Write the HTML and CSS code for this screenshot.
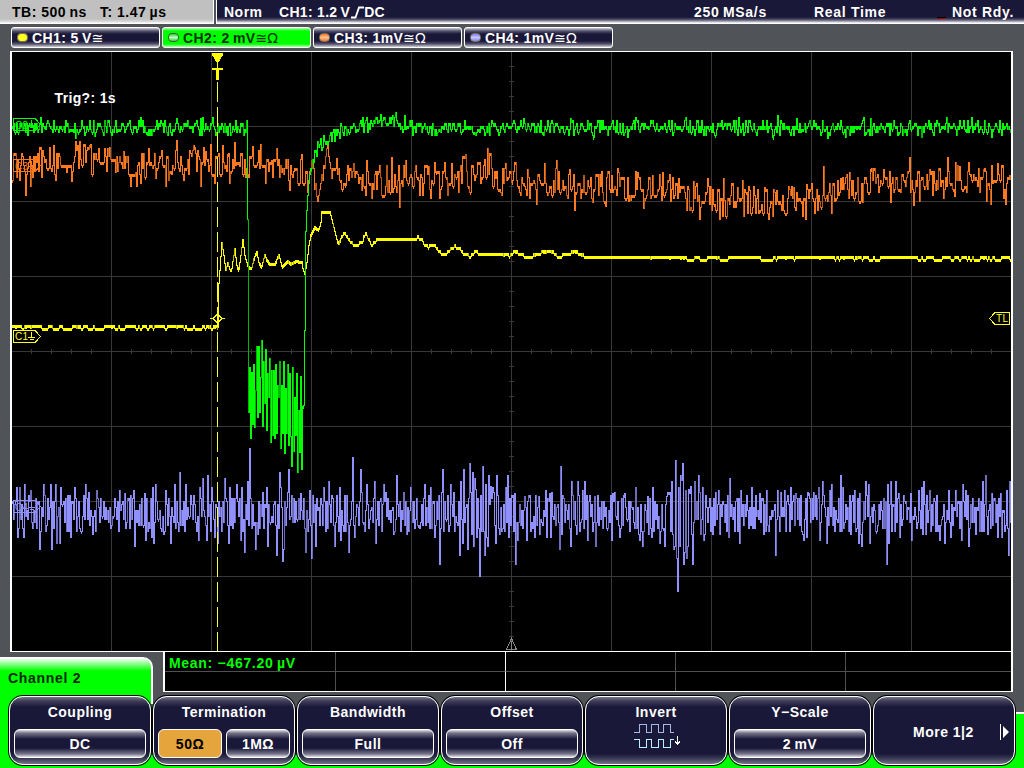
FILE: index.html
```html
<!DOCTYPE html>
<html lang="en">
<head>
    <meta charset="UTF-8">
    <title>Oscilloscope - Channel 2</title>
    <link rel="stylesheet" href="styles.css">
</head>
<body>
    <div class="screen">
        <header class="topbar">
            <div class="timebase"><span class="tb">TB: 500&#8201;ns</span><span class="tpos">T: 1.47&#8201;µs</span></div>
            <div class="status">
                <span class="mode">Norm</span>
                <span class="trigger">CH1: 1.2&#8201;V<svg class="edge" width="13" height="13" viewBox="0 0 13 13"><path d="M0 11.500H4.500L8 1.500H13"/></svg>DC</span>
                <span class="rate">250&#8201;MSa/s</span>
                <span class="acq">Real Time</span>
                <span class="led"></span>
                <span class="ready">Not Rdy.</span>
            </div>
        </header>

        <div class="channels">
            <div class="channel"><i class="dot yellow"></i><span>CH1: 5&#8201;V</span><b class="sym">≅</b></div>
            <div class="channel active"><i class="dot green"></i><span>CH2: 2&#8201;mV</span><b class="sym">≅Ω</b></div>
            <div class="channel"><i class="dot orange"></i><span>CH3: 1mV</span><b class="sym">≅Ω</b></div>
            <div class="channel"><i class="dot violet"></i><span>CH4: 1mV</span><b class="sym">≅Ω</b></div>
        </div>

        <div class="plot">
            <svg id="scope" width="999" height="599" viewBox="12 52 999 599">
                <path id="grid" class="grid"/>
                <path id="ch4" class="t4"/><path id="ch4d" class="t4 dim"/>
                <path id="ch3" class="t3"/><path id="ch3d" class="t3 dim"/>
                <path id="ch1" class="t1"/><path id="ch1d" class="t1 dim"/>
                <path id="ch2" class="t2"/><path id="ch2d" class="t2 dim"/>

                <!-- channel zero markers -->
                <g class="marker m2"><path d="M13.500 118.500H35L40.500 124.500L35 130.500H13.500Z"/><text x="15" y="129">C2</text><path d="M31.500 120V125M28 125.500H35M30 127.500H34"/></g>
                <g class="marker m3"><path d="M13.500 159.500H35L40.500 165.500L35 171.500H13.500Z"/><text x="15" y="170">C3</text><path d="M31.500 161V166M28 166.500H35M30 168.500H34"/></g>
                <g class="marker m1"><path d="M13.500 330.500H35L40.500 336.500L35 342.500H13.500Z"/><text x="15" y="340">C1</text><path d="M31.500 332V337M28 337.500H35M30 339.500H34"/></g>
                <g class="marker m4"><path d="M13.500 500.500H35L40.500 506.500L35 512.500H13.500Z"/><text x="15" y="511">C4</text><path d="M31.500 502V507M28 507.500H35M30 509.500H34"/></g>
                <g class="marker m1"><path d="M1009.500 312.500H995L989.500 318.500L995 324.500H1009.500Z"/><text x="996" y="322">TL</text></g>

                <!-- trigger position -->
                <path class="trig-line" d="M217.500 82V651"/>
                <path class="trig-fill" d="M212 53H223V55L218 63V68H223V70H219V80H216V70H212V68H217V63L212 55Z"/>
                <path class="trig-level" d="M210 318.500H213L217.500 314L222 318.500H225M213 318.500L217.500 323L222 318.500"/>
                <path class="center-mark" d="M511.500 638.500L506.500 649.500H516.500ZM511.500 641V649"/>
                <text class="trig-text" x="54.500" y="103">Trig?: 1s</text>
            </svg>
        </div>

        <div class="lower">
            <div class="tab">Channel 2</div>
            <div class="measure">
                <div class="mean">Mean: −467.20&#8201;µV</div><div></div><div></div><div></div><div></div>
                <div></div><div></div><div></div><div></div><div></div>
            </div>
        </div>

        <div class="menu">
            <div class="key"><span class="title">Coupling</span><div class="values"><span class="value">DC</span></div></div>
            <div class="key"><span class="title">Termination</span><div class="values"><span class="value selected">50Ω</span><span class="value">1MΩ</span></div></div>
            <div class="key"><span class="title">Bandwidth</span><div class="values"><span class="value">Full</span></div></div>
            <div class="key"><span class="title">Offset</span><div class="values"><span class="value">Off</span></div></div>
            <div class="key">
                <span class="title">Invert</span>
                <svg class="wave" width="48" height="28" viewBox="0 0 48 28">
                    <path class="w1" d="M0 10.500H5.500V2.500H12.500V10.500H17.500V2.500H24.500V10.500H29.500V2.500H36.500V10.500H40"/>
                    <path class="w2" d="M0 17.500H5.500V25.500H12.500V17.500H17.500V25.500H24.500V17.500H29.500V25.500H36.500V17.500H40"/>
                    <path class="w3" d="M43.500 14V22M41 19.500L43.500 22L46 19.500"/>
                </svg>
            </div>
            <div class="key"><span class="title">Y&#8722;Scale</span><div class="values"><span class="value">2&#8201;mV</span></div></div>
            <div class="key more"><span>More 1|2</span><svg class="next" width="10" height="16" viewBox="0 0 10 16"><path d="M0 0H1V16H0ZM3 2L9 8L3 14Z"/></svg></div>
        </div>
    </div>
    <script src="scope.js"></script>
</body>
</html>
```
FILE: styles.css
```css
* { box-sizing: border-box; }

body {
    margin: 0;
    background: #505357;
    font-family: "Liberation Sans", Arial, sans-serif;
    font-size: 14px;
    font-weight: bold;
    letter-spacing: 0.7px;
    color: #fff;
}

.screen {
    width: 1024px;
    height: 768px;
    display: flex;
    flex-direction: column;
    overflow: hidden;
    white-space: nowrap;
    background: #505357;
}

/* top status bar */
.topbar {
    display: flex;
    gap: 2px;
    height: 24px;
    line-height: 24px;
    flex: none;
}

.timebase {
    width: 214px;
    display: flex;
    padding-left: 12px;
    letter-spacing: 0.5px;
    color: #000;
    background: linear-gradient(#c0c0c0 19px, #e0e0e0 22px, #fff 23px);
    border-right: 1px solid #fff;
}
.tb { width: 88px; }

.status {
    flex: 1;
    display: flex;
    padding-left: 7px;
    border-left: 1px solid #fff;
    background: linear-gradient(#1a1838 17px, #3d3b57 19px, #8f8fa2 21px, #fff 23px);
}
.mode { width: 55px; letter-spacing: 0.5px; }
.trigger { width: 415px; letter-spacing: 0.3px; }
.rate { width: 120px; }
.acq { width: 123px; }
.led { width: 9px; height: 2px; margin: 17px 6px 0 0; background: #b00000; border-top: 1px solid #000; }

.edge { vertical-align: -2px; margin: 0 0 0 1px; }
.edge path { fill: none; stroke: #fff; stroke-width: 1.8; }

/* channel pills */
.channels {
    display: flex;
    gap: 2px;
    height: 27px;
    padding: 3px 0 0 11px;
    flex: none;
}

.channel {
    width: 149px;
    height: 21px;
    padding-left: 5px;
    display: flex;
    align-items: center;
    letter-spacing: 0.4px;
    border: 1px solid #fff;
    border-radius: 3px;
    background: linear-gradient(#d0d0d8 0, #55536c 3px, #1a1838 6px, #1a1838 13px, #55536c 16px, #d0d0d8 19px);
}
.channel.active {
    color: #003000;
    background: linear-gradient(#b0ffb0 0, #00ff00 3px, #00ff00 16px, #b0ffb0 19px);
}

.dot {
    width: 11px;
    height: 9px;
    margin-right: 4px;
    border-radius: 4px;
    border: 1px solid #77715a;
}
.dot.yellow { background: #ffff20; }
.dot.green { background: linear-gradient(#30d030, #c0ffc0, #30d030); border-color: #356035; }
.dot.orange { background: linear-gradient(#ff7520, #ffc090, #ff7520); }
.dot.violet { background: linear-gradient(#8080ff, #c8c8ff, #8080ff); }

.sym {
    font-family: "DejaVu Sans", sans-serif;
    font-weight: normal;
    font-size: 14px;
    letter-spacing: 0;
}

/* waveform area */
.plot {
    width: 1003px;
    height: 601px;
    margin-left: 10px;
    border: solid #fff;
    border-width: 1px 2px;
    background: #000;
    flex: none;
}
.plot svg { display: block; }
.plot path { fill: none; shape-rendering: crispEdges; }

.grid { stroke: #383838; }
.t1 { stroke: #ffff00; }
.t2 { stroke: #00ff00; }
.t3 { stroke: #ff7a1e; }
.t4 { stroke: #9090ff; }
.t1.dim { stroke: #b8b800; }
.t2.dim { stroke: #00b800; }
.t3.dim { stroke: #b85818; }
.t4.dim { stroke: #6c6cba; }

.marker text { font-size: 10px; font-weight: normal; letter-spacing: 0.3px; }
.m1 path { stroke: #ffff20; }
.m1 text { fill: #ffff20; }
.m2 path { stroke: #00ff00; }
.m2 text { fill: #00ff00; }
.m3 path { stroke: #ff7a1e; }
.m3 text { fill: #ff7a1e; }
.m4 path { stroke: #9090ff; }
.m4 text { fill: #9090ff; }

.trig-line { stroke: #ffff30; stroke-dasharray: 20 5; }
.plot .trig-fill { fill: #ffff00; }
.trig-level { stroke: #ffff20; }
.center-mark { stroke: #888; }
.trig-text { fill: #fff; letter-spacing: 0.35px; }

/* tab and measurement table */
.lower {
    display: flex;
    height: 40px;
    flex: none;
}

.tab {
    width: 153px;
    height: 35px;
    margin: 5px 10px 0 0;
    padding: 12px 0 0 8px;
    color: #002800;
    border-top: 1px solid #fff;
    border-right: 2px solid #fff;
    border-top-right-radius: 10px;
    background: linear-gradient(#fff, #00ff00 13px);
}

.measure {
    width: 850px;
    display: grid;
    grid-template-columns: 171px 170px 170px 170px 165px;
    grid-template-rows: 20px 19px;
    border: solid #fff;
    border-width: 0 2px 1px 2px;
    background: #000;
}
.measure div { border-right: 1px solid #505050; }
.measure div:nth-child(5n) { border-right: 0; }
.measure div:nth-child(5n+2) { border-right-color: #fff; }
.measure div:nth-child(-n+5) { border-bottom: 1px solid #505050; }
.measure .mean { padding-left: 4px; line-height: 22px; color: #00ff00; }

/* soft keys */
.menu {
    flex: none;
    display: flex;
    gap: 2px;
    height: 76px;
    padding: 4px 0 0 9px;
    letter-spacing: 0.5px;
    background:
        linear-gradient(#fff, #fff) 151px 0 / 2px 12px no-repeat,
        linear-gradient(#0f0, #0f0) 0 0 / 151px 76px no-repeat,
        linear-gradient(#fff 2px, #0f0 2px) 100% 20px / 9px 56px no-repeat,
        linear-gradient(#0f0, #0f0) 0 63px / 100% 13px no-repeat;
}

.key {
    width: 142px;
    height: 69px;
    padding: 6px 4px 0;
    display: flex;
    flex-direction: column;
    align-items: center;
    border: 1px solid #fff;
    border-radius: 14px;
    box-shadow: 0 0 0 1px #000;
    background: linear-gradient(#77758a 0, #3f3d58 4px, #1a1838 10px, #1a1838 57px, #3f3d58 62px, #77758a 67px);
}
.title { height: 26px; line-height: 19px; }

.values {
    display: flex;
    gap: 4px;
    align-self: stretch;
}
.value {
    flex: 1;
    height: 29px;
    line-height: 28px;
    text-align: center;
    border: 1px solid #fff;
    border-radius: 6px;
    background: linear-gradient(#e0e0e6 0, #77758a 3px, #1a1838 9px, #1a1838 18px, #77758a 24px, #e0e0e6 27px);
}
.value.selected {
    color: #000;
    background: #e5a43c;
}

.wave { margin: -7px 0 0 4px; fill: none; shape-rendering: crispEdges; }
.w1 { stroke: #a8b8e0; }
.w2 { stroke: #b8f0ff; }
.w3 { stroke: #fff; }

.more {
    flex-direction: row;
    padding: 3px 4px 0 39px;
    justify-content: space-between;
}
.next { fill: #fff; }
```
FILE: scope.js
```js
// pseudo random generator, same traces on every load
var seed = 20;
function rnd() {
    seed = (seed * 16807) % 2147483647;
    return seed / 2147483647;
}

function interp(pts, x) {
    for (var i = 1; i < pts.length; i++) {
        if (x <= pts[i][0]) {
            var a = pts[i - 1], b = pts[i];
            return a[1] + (b[1] - a[1]) * (x - a[0]) / (b[0] - a[0]);
        }
    }
    return pts[pts.length - 1][1];
}

// "x,y x,y" -> [[x, y], ...]
function points(s) {
    return s.trim().split(/\s+/).map(function (p) { return p.split(',').map(Number); });
}

// one vertical segment per pixel column
function draw(id, v, dimRate) {
    var d = '', dim = '';
    for (var x = 12; x < 1011; x++) {
        var prev = v[x - 1] === undefined ? v[x] : v[x - 1];
        var top = Math.min(prev, v[x]), bottom = Math.max(prev, v[x]);
        var seg = 'M' + (x + 0.5) + ' ' + top + 'V' + (bottom + (bottom - top < 3 ? 3 : 1));
        if (rnd() < dimRate && bottom > top) { dim += seg; } else { d += seg; }
    }
    document.getElementById(id).setAttribute('d', d);
    document.getElementById(id + 'd').setAttribute('d', dim);
}

function quant(y) { return Math.round(y / 3) * 3; }

// grid
var g = '';
for (var x = 111; x < 1011; x += 100) { g += 'M' + (x + 0.5) + ' 52V651'; }
for (var y = 126; y < 600; y += 75) { g += 'M12 ' + (y + 0.5) + 'H1011'; }
for (x = 31; x < 1011; x += 20) { g += 'M' + (x + 0.5) + ' 349V354'; }
for (y = 66; y < 650; y += 15) { g += 'M509 ' + (y + 0.5) + 'H514'; }
document.getElementById('grid').setAttribute('d', g);

// CH4
var ch4 = [], side = 1;
for (x = 12; x < 1011; x++) {
    if (rnd() < 0.72) { side = -side; }
    var burst = x > 670 && x < 692 ? 14 : (x > 465 && x < 500 ? 7 : 0);
    ch4[x] = quant(513 + side * (2 + burst + rnd() * 18));
}
points(`17,487 20,487 25,484 31,490 44,484 51,484 56,484 61,487 75,487 86,484 97,490 120,490 125,493 134,490
145,493 153,487 156,484 166,490 175,484 180,472 186,484 200,487 203,478 208,475 212,487 225,478 230,487 237,484
242,487 248,481 250,448 263,492 267,487 280,472 281,487 289,469 301,493 310,490 324,487 329,481 340,487 353,457
361,469 367,484 375,481 384,484 397,475 411,487 425,484 431,487 443,469 451,484 461,481 464,469 470,463 473,472
475,478 483,466 486,484 489,475 493,487 497,475 506,487 508,475 515,493 525,496 539,496 546,490 550,493 561,466
572,481 578,481 583,490 585,481 595,496 613,493 625,493 636,487 648,496 653,487 667,496 672,481 676,460 679,487
681,475 683,463 686,490 690,493 695,481 699,475 703,487 719,490 730,478 741,490 752,487 760,493 767,490 778,490
785,490 791,487 796,493 809,493 819,487 823,481 830,490 832,484 841,475 843,487 855,490 860,493 866,481 869,484
888,484 891,481 896,481 899,493 911,493 919,490 922,487 924,481 930,490 949,490 956,490 963,484 966,490 983,481
986,475 992,493 1001,493 1007,490 1010,481
18,537 24,537 40,549 46,531 52,549 57,543 60,543 71,537 77,531 93,534 119,531 135,546 146,540 152,537 154,543
164,534 171,543 199,540 207,540 215,537 218,543 229,543 241,540 245,552 256,549 268,546 277,555 283,561 284,549
306,552 312,558 316,546 335,546 341,540 349,552 355,537 376,543 407,534 435,537 440,564 460,555 463,543 468,549
474,546 480,576 485,555 488,546 496,543 509,537 516,564 518,540 527,540 535,537 540,534 547,537 551,537 560,549
571,546 577,534 588,540 596,546 612,540 620,537 640,540 643,546 652,537 660,543 665,546 674,549 677,558 678,591
684,564 685,552 687,558 693,564 701,534 704,540 720,534 729,537 740,543 755,528 764,534 776,555 804,540 807,537
820,540 827,543 842,531 851,534 859,543 862,546 870,543 876,531 887,564 889,543 900,537 912,540 923,534 940,540
945,543 951,537 962,540 969,546 976,534 988,534 998,537 1002,537 1009,555`).forEach(function (p) { ch4[p[0] - 1] = p[1]; });
draw('ch4', ch4, 0.25);

// CH3
var mean3 = points(`12,168 40,162 60,162 80,156 105,155 120,162 140,166 180,163 200,160 235,158 260,164 300,169
330,168 345,178 400,182 440,180 470,174 490,172 520,182 600,185 660,188 700,199 760,202 800,198 840,188 870,180
930,181 960,178 985,182 1000,183 1011,186`);
var ch3 = [];
for (x = 12; x < 1011; x++) {
    ch3[x] = rnd() < 0.25 && x > 12 ? ch3[x - 1] : quant(interp(mean3, x) + (rnd() + rnd() - 1) * 21);
}
points(`12,180 25,195 30,186 34,170 53,145 57,168 66,172 71,181 77,145 89,145 98,148 104,148 107,148 115,172
123,151 130,186 135,172 148,148 155,178 161,150 165,186 176,140 178,168 183,180 193,145 197,150 200,186 205,151
214,183 222,145 227,154 229,183 234,142 239,166 247,174 252,146 258,150 265,183 271,160 276,148 281,172 289,190
301,154 307,192 311,160 315,183 316,196 317,201 318,195 319,189 320,183 321,174 323,165 325,156 326,148 327,142
328,156 331,178 336,158 345,185 353,163 361,190 366,160 371,198 378,172 391,157 393,188 396,192 399,207 401,180
403,165 405,160 422,195 428,166 430,198 435,172 439,198 451,163 458,192 465,154 475,175 487,148 495,178 501,195
505,163 511,182 519,192 527,169 536,204 544,163 548,192 556,160 563,190 569,169 574,210 583,175 592,202 605,206
611,175 618,172 630,200 637,172 643,208 652,175 661,200 662,172 670,201 678,178 686,210 693,181 699,219 707,178
723,178 724,200 737,187 743,216 749,190 755,213 764,187 768,219 776,190 783,210 793,187 805,219 806,184 817,210
823,166 831,213 840,178 849,172 862,202 870,169 883,169 890,202 900,192 909,157 913,205 929,169 935,190 947,157
954,196 959,166 966,192 983,169 990,204 997,163 1005,204 1009,175`).forEach(function (p) { ch3[p[0]] = p[1]; });
draw('ch3', ch3, 0.25);

// CH1
var mean1 = points(`217,327 218,283 219,270 221,242 223,255 225,270 227,262 229,269 231,268 234,248 236,265 238,269
240,255 242,239 244,255 247,266 251,267 253,258 256,251 258,262 261,266 264,254 266,259 269,263 274,263 278,254
281,266 284,263 287,260 290,263 295,260 301,261 302,268 304,274 306,262 308,245 310,234 314,226 318,229 320,222
321,211 329,211 331,219 336,239 338,242 343,232 346,236 350,242 356,243 357,245 362,239 365,233 367,238 371,245
376,238 408,238 418,236 421,239 424,245 434,245 438,250 443,254 450,248 454,245 460,249 466,254 470,256 474,251
480,253 510,254 514,251 530,256 542,251 552,251 558,256 567,252 576,251 584,256 685,257 1011,258`);
var ch1 = [], low = 0;
for (x = 12; x < 1011; x++) {
    if (rnd() < 0.45) { low = rnd() < (x > 217 ? 0.35 : 0.5) ? 3 : 0; }
    if (x < 217) {
        ch1[x] = 325 + low;
    } else if (x > 685) {
        ch1[x] = 256 + low;
    } else if (x > 340) {
        ch1[x] = quant(interp(mean1, x) - 1 + (rnd() - 0.5) * 2) + 1;
    } else {
        ch1[x] = Math.round(interp(mean1, x));
    }
}
draw('ch1', ch1, 0.2);

// CH2
var mean2 = points(`12,127 246,127 247,218 248,405 303,405 304,331 305,230 306,210 308,180 311,163 314,153 318,146
324,140 332,136 340,129 360,126 375,122 392,119 402,127 1011,127`);
var ch2 = [];
for (x = 12; x < 1011; x++) {
    var n = (x > 246 && x < 311) ? 0 : (rnd() + rnd() - 1) * 10;
    ch2[x] = quant(interp(mean2, x) + n);
}
points('75,138 94,136 164,120 176,118 200,118 392,115 395,112 404,115 523,118 570,118 593,137 627,137 777,115 796,118 772,137 845,137 870,118 921,137 991,137')
    .forEach(function (p) { ch2[p[0]] = p[1]; });
// ringing while the gate is low
points(`249,412 250,367 251,438 252,372 253,424 254,364 255,427 256,390 257,346 258,417 259,346 260,412 261,377
262,340 263,426 264,361 265,403 266,349 267,430 268,373 269,397 270,358 271,442 272,370 273,435 274,370 275,438
276,364 277,433 278,385 279,397 280,361 281,448 282,385 283,433 284,361 285,453 286,388 287,433 288,364 289,445
290,373 291,436 292,466 293,367 294,451 295,397 296,435 297,373 298,472 299,410 300,452 301,376 302,469 303,406`)
    .forEach(function (p) { ch2[p[0] - 1] = p[1]; });
draw('ch2', ch2, 0.2);
```
